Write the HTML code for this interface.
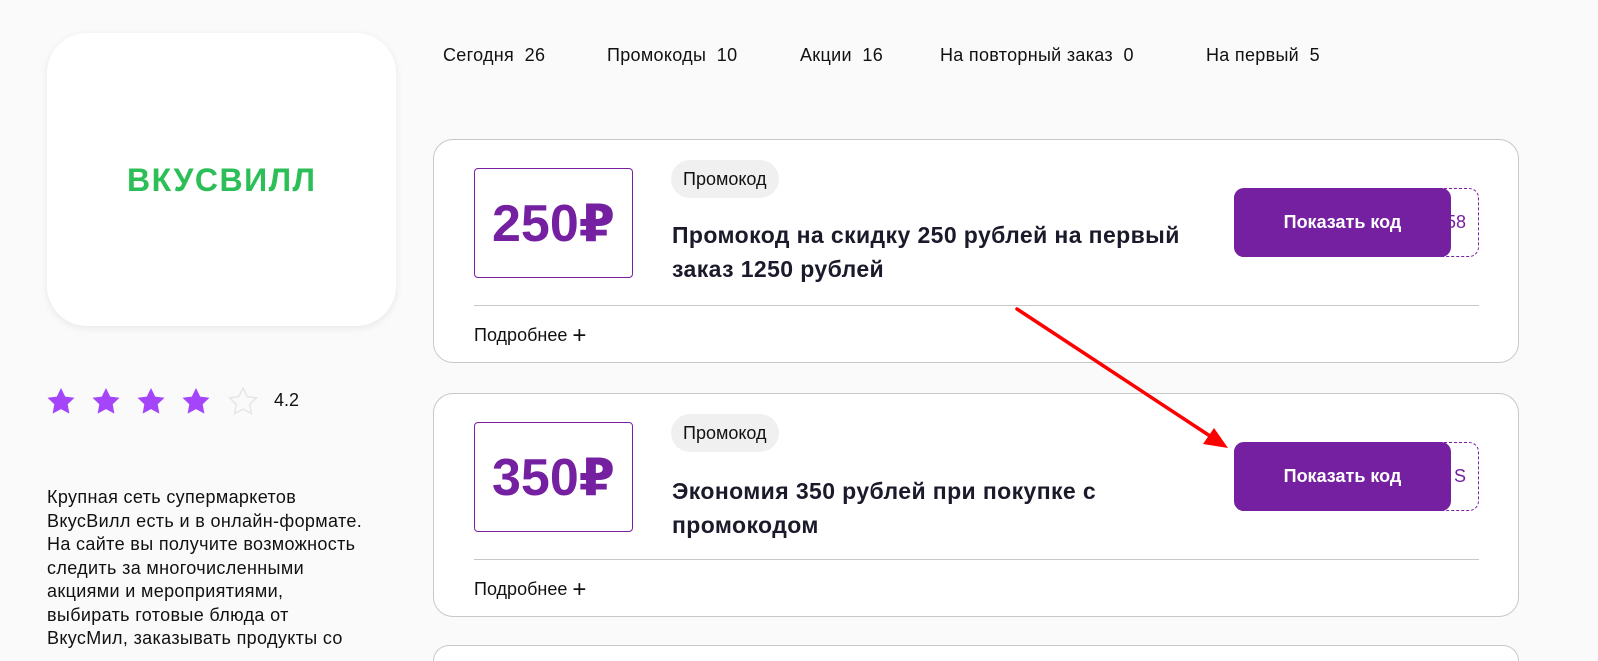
<!DOCTYPE html>
<html><head><meta charset="utf-8"><style>
*{box-sizing:border-box;margin:0;padding:0}
html,body{width:1598px;height:661px;overflow:hidden}
body{background:#fafafa;font-family:"Liberation Sans","DejaVu Sans",sans-serif;color:#1a1a2a;position:relative}
.abs{position:absolute}
.logo{left:47px;top:33px;width:349px;height:293px;background:#fff;border-radius:40px;box-shadow:0 2px 8px rgba(0,0,0,0.08)}
.logo span{position:absolute;left:80px;top:129px;font-size:32px;font-weight:bold;color:#2cbf57;letter-spacing:1.5px}
.nav{top:45px;font-size:18px;color:#111;letter-spacing:0.3px}
.card{left:433px;width:1086px;height:224px;background:#fff;border:1px solid #c8c8c8;border-radius:20px}
.amt{left:40px;top:28px;width:159px;height:110px;border:1px solid #7a1fa2;border-radius:4px;color:#7420a0;font-size:52px;font-weight:bold;text-align:center;line-height:110px}
.tag{left:237px;top:20px;height:38px;padding:0 12px;background:#f0f0f0;border-radius:19px;font-size:18px;line-height:38px;color:#111}
.title{left:238px;font-size:23px;font-weight:bold;line-height:34px;color:#1a1a2a;width:545px;letter-spacing:0.4px}
.code{left:800px;top:48px;width:245px;height:69px;border:1px dashed #7a1fa2;border-radius:10px;color:#7420a0;font-size:18px;line-height:67px;text-align:right;padding-right:12px}
.btn{left:800px;top:48px;width:217px;height:69px;background:#7420a0;border-radius:10px;color:#fff;font-size:18px;font-weight:bold;text-align:center;line-height:69px}
.hr{left:40px;width:1005px;height:1px;background:#c8c8c8}
.more{left:40px;font-size:18px;color:#111}
.desc{left:47px;top:486px;font-size:18px;line-height:23.5px;color:#111;letter-spacing:0.35px;white-space:nowrap}
</style></head><body>
<div class="abs logo"><span>ВКУСВИЛЛ</span></div>
<div class="abs nav" style="left:443px">Сегодня&nbsp; 26</div>
<div class="abs nav" style="left:607px">Промокоды&nbsp; 10</div>
<div class="abs nav" style="left:800px">Акции&nbsp; 16</div>
<div class="abs nav" style="left:940px">На повторный заказ&nbsp; 0</div>
<div class="abs nav" style="left:1206px">На первый&nbsp; 5</div>

<svg class="abs" style="left:44px;top:386px" width="220" height="32" viewBox="0 0 220 32">
<defs><path id="s" d="M16 2 L20.2 10.6 L29.5 11.8 L22.7 18.3 L24.4 27.6 L16 23.1 L7.6 27.6 L9.3 18.3 L2.5 11.8 L11.8 10.6 Z"/></defs>
<use href="#s" x="1" fill="#a445fa"/><use href="#s" x="46" fill="#a445fa"/><use href="#s" x="91" fill="#a445fa"/><use href="#s" x="136" fill="#a445fa"/>
<use href="#s" x="183" fill="none" stroke="#e6e6e6" stroke-width="1.5"/>
</svg>
<div class="abs" style="left:274px;top:390px;font-size:18px;color:#111">4.2</div>

<div class="abs desc">Крупная сеть супермаркетов<br>ВкусВилл есть и в онлайн-формате.<br>На сайте вы получите возможность<br>следить за многочисленными<br>акциями и мероприятиями,<br>выбирать готовые блюда от<br>ВкусМил, заказывать продукты со</div>

<div class="abs card" style="top:139px">
<div class="abs amt">250₽</div>
<div class="abs tag">Промокод</div>
<div class="abs title" style="top:78px">Промокод на скидку 250 рублей на первый заказ 1250 рублей</div>
<div class="abs code">58</div>
<div class="abs btn">Показать код</div>
<div class="abs hr" style="top:165px"></div>
<div class="abs more" style="top:180px">Подробнее <span style="font-size:24px;position:relative;top:2px">+</span></div>
</div>

<div class="abs card" style="top:393px">
<div class="abs amt">350₽</div>
<div class="abs tag">Промокод</div>
<div class="abs title" style="top:80px">Экономия 350 рублей при покупке с промокодом</div>
<div class="abs code">S</div>
<div class="abs btn">Показать код</div>
<div class="abs hr" style="top:165px"></div>
<div class="abs more" style="top:180px">Подробнее <span style="font-size:24px;position:relative;top:2px">+</span></div>
</div>

<div class="abs card" style="top:645px;height:16px;border-bottom:none;border-radius:20px 20px 0 0"></div>

<svg class="abs" style="left:0;top:0" width="1598" height="661">
<line x1="1017" y1="309" x2="1210" y2="436" stroke="#ff0000" stroke-width="3.5" stroke-linecap="round"/>
<polygon points="1228,448 1203,444 1214,428" fill="#ff0000"/>
</svg>
</body></html>
